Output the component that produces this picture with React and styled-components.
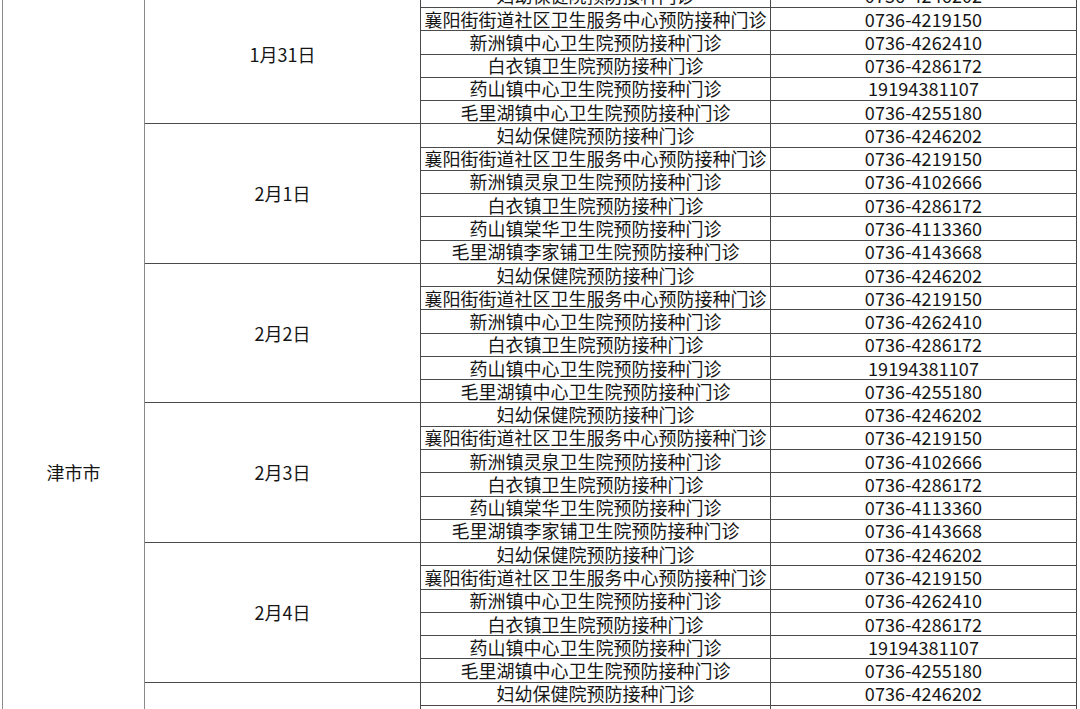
import React from 'react';
import styled, { createGlobalStyle } from 'styled-components';

const GlobalStyle = createGlobalStyle`
  html, body {
    margin: 0;
    padding: 0;
    background: #fff;
    overflow: hidden;
  }
  body {
    font-family: "Noto Sans CJK SC", "Noto Sans", sans-serif;
    color: #151515;
  }
`;

const ROW_H = 23.28;

const scheduleA = [
  ['妇幼保健院预防接种门诊', '0736-4246202'],
  ['襄阳街街道社区卫生服务中心预防接种门诊', '0736-4219150'],
  ['新洲镇中心卫生院预防接种门诊', '0736-4262410'],
  ['白衣镇卫生院预防接种门诊', '0736-4286172'],
  ['药山镇中心卫生院预防接种门诊', '19194381107'],
  ['毛里湖镇中心卫生院预防接种门诊', '0736-4255180'],
];

const scheduleB = [
  ['妇幼保健院预防接种门诊', '0736-4246202'],
  ['襄阳街街道社区卫生服务中心预防接种门诊', '0736-4219150'],
  ['新洲镇灵泉卫生院预防接种门诊', '0736-4102666'],
  ['白衣镇卫生院预防接种门诊', '0736-4286172'],
  ['药山镇棠华卫生院预防接种门诊', '0736-4113360'],
  ['毛里湖镇李家铺卫生院预防接种门诊', '0736-4143668'],
];

const days = [
  { date: '1月31日', clinics: scheduleA },
  { date: '2月1日', clinics: scheduleB },
  { date: '2月2日', clinics: scheduleA },
  { date: '2月3日', clinics: scheduleB },
  { date: '2月4日', clinics: scheduleA },
  { date: '2月5日', clinics: scheduleB },
  { date: '2月6日', clinics: scheduleA },
];

const totalRows = days.reduce((n, d) => n + d.clinics.length, 0);

const Page = styled.div`
  height: 709px;
  overflow: hidden;
`;

const Sheet = styled.div`
  margin-top: -16.3px;
  padding-left: 2px;
`;

const Table = styled.table`
  width: 1074px;
  border-collapse: collapse;
  table-layout: fixed;
  font-size: 18px;
`;

const Row = styled.tr`
  height: ${ROW_H}px;
`;

const Cell = styled.td`
  border: 1px solid ${(p) => (p.$soft ? '#8a8a8a' : '#4a4a4a')};
  padding: 0;
  text-align: center;
  vertical-align: middle;
  line-height: 21px;
  white-space: nowrap;
  overflow: hidden;
`;

const Phone = styled(Cell)`
  letter-spacing: 0.1px;
`;

export default function App() {
  return (
    <Page>
      <GlobalStyle />
      <Sheet>
        <Table>
          <colgroup>
            <col style={{ width: 142 }} />
            <col style={{ width: 276 }} />
            <col style={{ width: 350 }} />
            <col style={{ width: 306 }} />
          </colgroup>
          <tbody>
            {days.map((day, di) =>
              day.clinics.map(([name, phone], ri) => (
                <Row key={`${di}-${ri}`}>
                  {di === 0 && ri === 0 && (
                    <Cell rowSpan={totalRows} $soft>津市市</Cell>
                  )}
                  {ri === 0 && <Cell rowSpan={day.clinics.length}>{day.date}</Cell>}
                  <Cell>{name}</Cell>
                  <Phone>{phone}</Phone>
                </Row>
              ))
            )}
          </tbody>
        </Table>
      </Sheet>
    </Page>
  );
}
